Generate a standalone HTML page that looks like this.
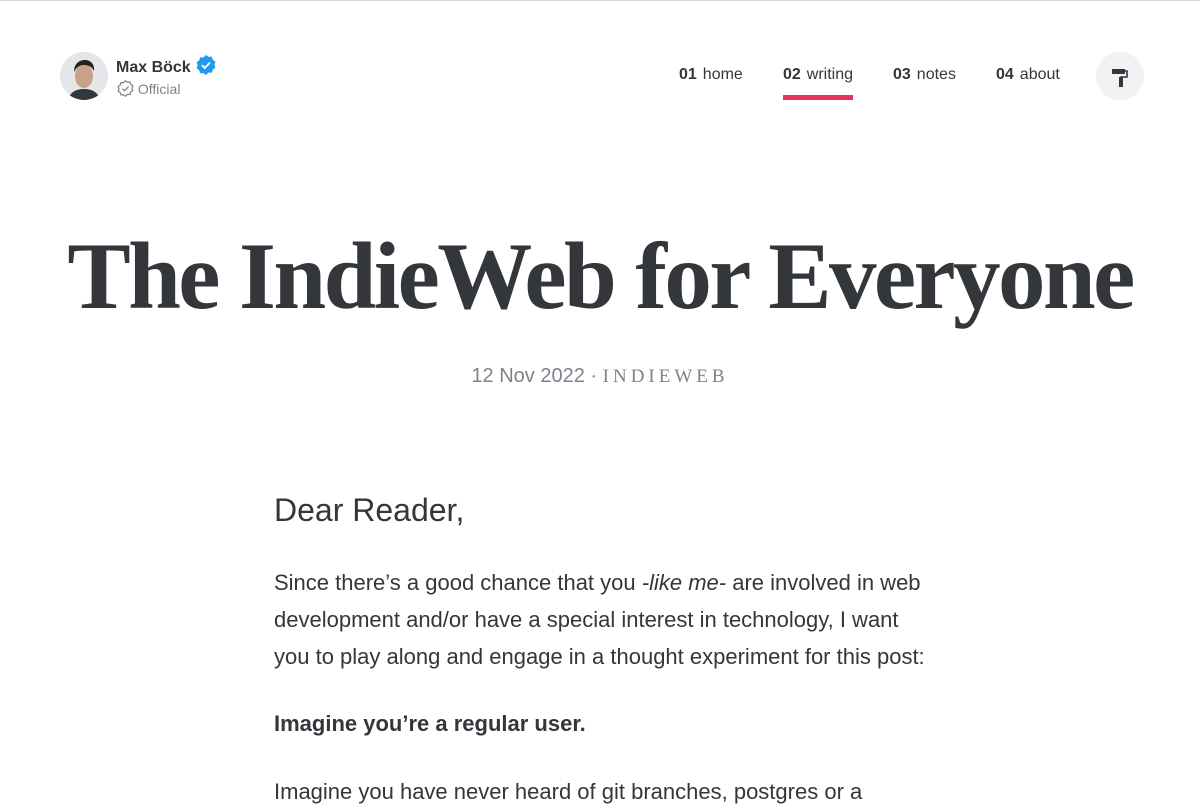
<!DOCTYPE html>
<html><head><meta charset="utf-8"><style>
*{margin:0;padding:0;box-sizing:border-box}
body{width:1200px;height:800px;overflow:hidden;background:#fff;border-top:1px solid #d6d8db;font-family:"Liberation Sans",sans-serif;color:#33363b;position:relative}
.av{position:absolute;left:60px;top:51px;width:48px;height:48px;border-radius:50%;background:#e4e6ea;overflow:hidden}
.name{position:absolute;left:116px;top:53px;font-weight:bold;font-size:16px;color:#33363b}
.off{position:absolute;left:117px;top:79px;font-size:14px;color:#7d838b}
nav{position:absolute;top:65px;font-size:16px;color:#33363b}
nav span{position:absolute;white-space:nowrap}
nav b{margin-right:6px}
.ul{position:absolute;left:783px;top:94px;width:70px;height:5px;background:#e8315b}
.btn{position:absolute;left:1096px;top:51px;width:48px;height:48px;border-radius:50%;background:#f2f2f5}
h1{position:absolute;left:0;width:1200px;top:220px;text-align:center;font-family:"Liberation Serif",serif;font-weight:bold;font-size:95px;letter-spacing:-2.6px;color:#33363b;white-space:nowrap}
.meta{position:absolute;top:364px;width:1200px;text-align:center;font-size:20px;color:#7d838b}
.meta .t{font-family:"Liberation Serif",serif;letter-spacing:4px;font-size:19px}
.c{position:absolute;left:274px;width:660px}
p{font-size:22px;line-height:37px}
</style></head><body>
<div class="av"><svg width="48" height="48" viewBox="0 0 48 48"><ellipse cx="24" cy="24" rx="9" ry="12" fill="#c9a088"/><path d="M14 20c0-9 6-12 11-12s10 4 9 11c-2-4-5-6-10-6s-8 3-10 7z" fill="#2a1f1a"/><path d="M8 48c2-8 8-11 16-11s14 3 16 11z" fill="#33363b"/></svg></div>
<div class="name">Max Böck <svg style="vertical-align:-4px" width="22" height="22" viewBox="0 0 22 22"><path d="M11 1l2.6 1.9 3.2-.2 1 3 2.6 1.9-1 3.1 1 3-2.6 1.9-1 3.1-3.2-.2L11 21l-2.6-1.9-3.2.2-1-3-2.6-1.9 1-3.1-1-3 2.6-1.9 1-3.1 3.2.2z" fill="#1d9bf0"/><path d="M7 11.2l2.8 2.8 5.2-5.5" stroke="#fff" stroke-width="2" fill="none"/></svg></div>
<div class="off"><svg style="vertical-align:-3px" width="17" height="17" viewBox="0 0 22 22"><path d="M11 1l2.6 1.9 3.2-.2 1 3 2.6 1.9-1 3.1 1 3-2.6 1.9-1 3.1-3.2-.2L11 21l-2.6-1.9-3.2.2-1-3-2.6-1.9 1-3.1-1-3 2.6-1.9 1-3.1 3.2.2z" fill="none" stroke="#7d838b" stroke-width="1.6"/><path d="M7 11.2l2.8 2.8 5.2-5.5" stroke="#7d838b" stroke-width="1.6" fill="none"/></svg> Official</div>
<nav><span style="left:679px"><b>01</b>home</span><span style="left:783px"><b>02</b>writing</span><span style="left:893px"><b>03</b>notes</span><span style="left:996px"><b>04</b>about</span></nav>
<div class="ul"></div>
<div class="btn"><svg width="48" height="48" viewBox="0 0 48 48"><rect x="16" y="17" width="13" height="5" fill="#33363b"/><path d="M29 19h2v6h-6v2" stroke="#33363b" stroke-width="1.6" fill="none"/><rect x="23" y="25" width="4" height="10" fill="#33363b"/></svg></div>
<h1>The IndieWeb for Everyone</h1>
<div class="meta">12 Nov 2022 · <span class="t">INDIEWEB</span></div>
<div class="c" style="top:491px;font-size:32px">Dear Reader,</div>
<div class="c" style="top:563px"><p>Since there’s a good chance that you <i>-like me-</i> are involved in web development and/or have a special interest in technology, I want you to play along and engage in a thought experiment for this post:</p></div>
<div class="c" style="top:704px"><p><b>Imagine you’re a regular user.</b></p></div>
<div class="c" style="top:772px"><p>Imagine you have never heard of git branches, postgres or a</p></div>
</body></html>
